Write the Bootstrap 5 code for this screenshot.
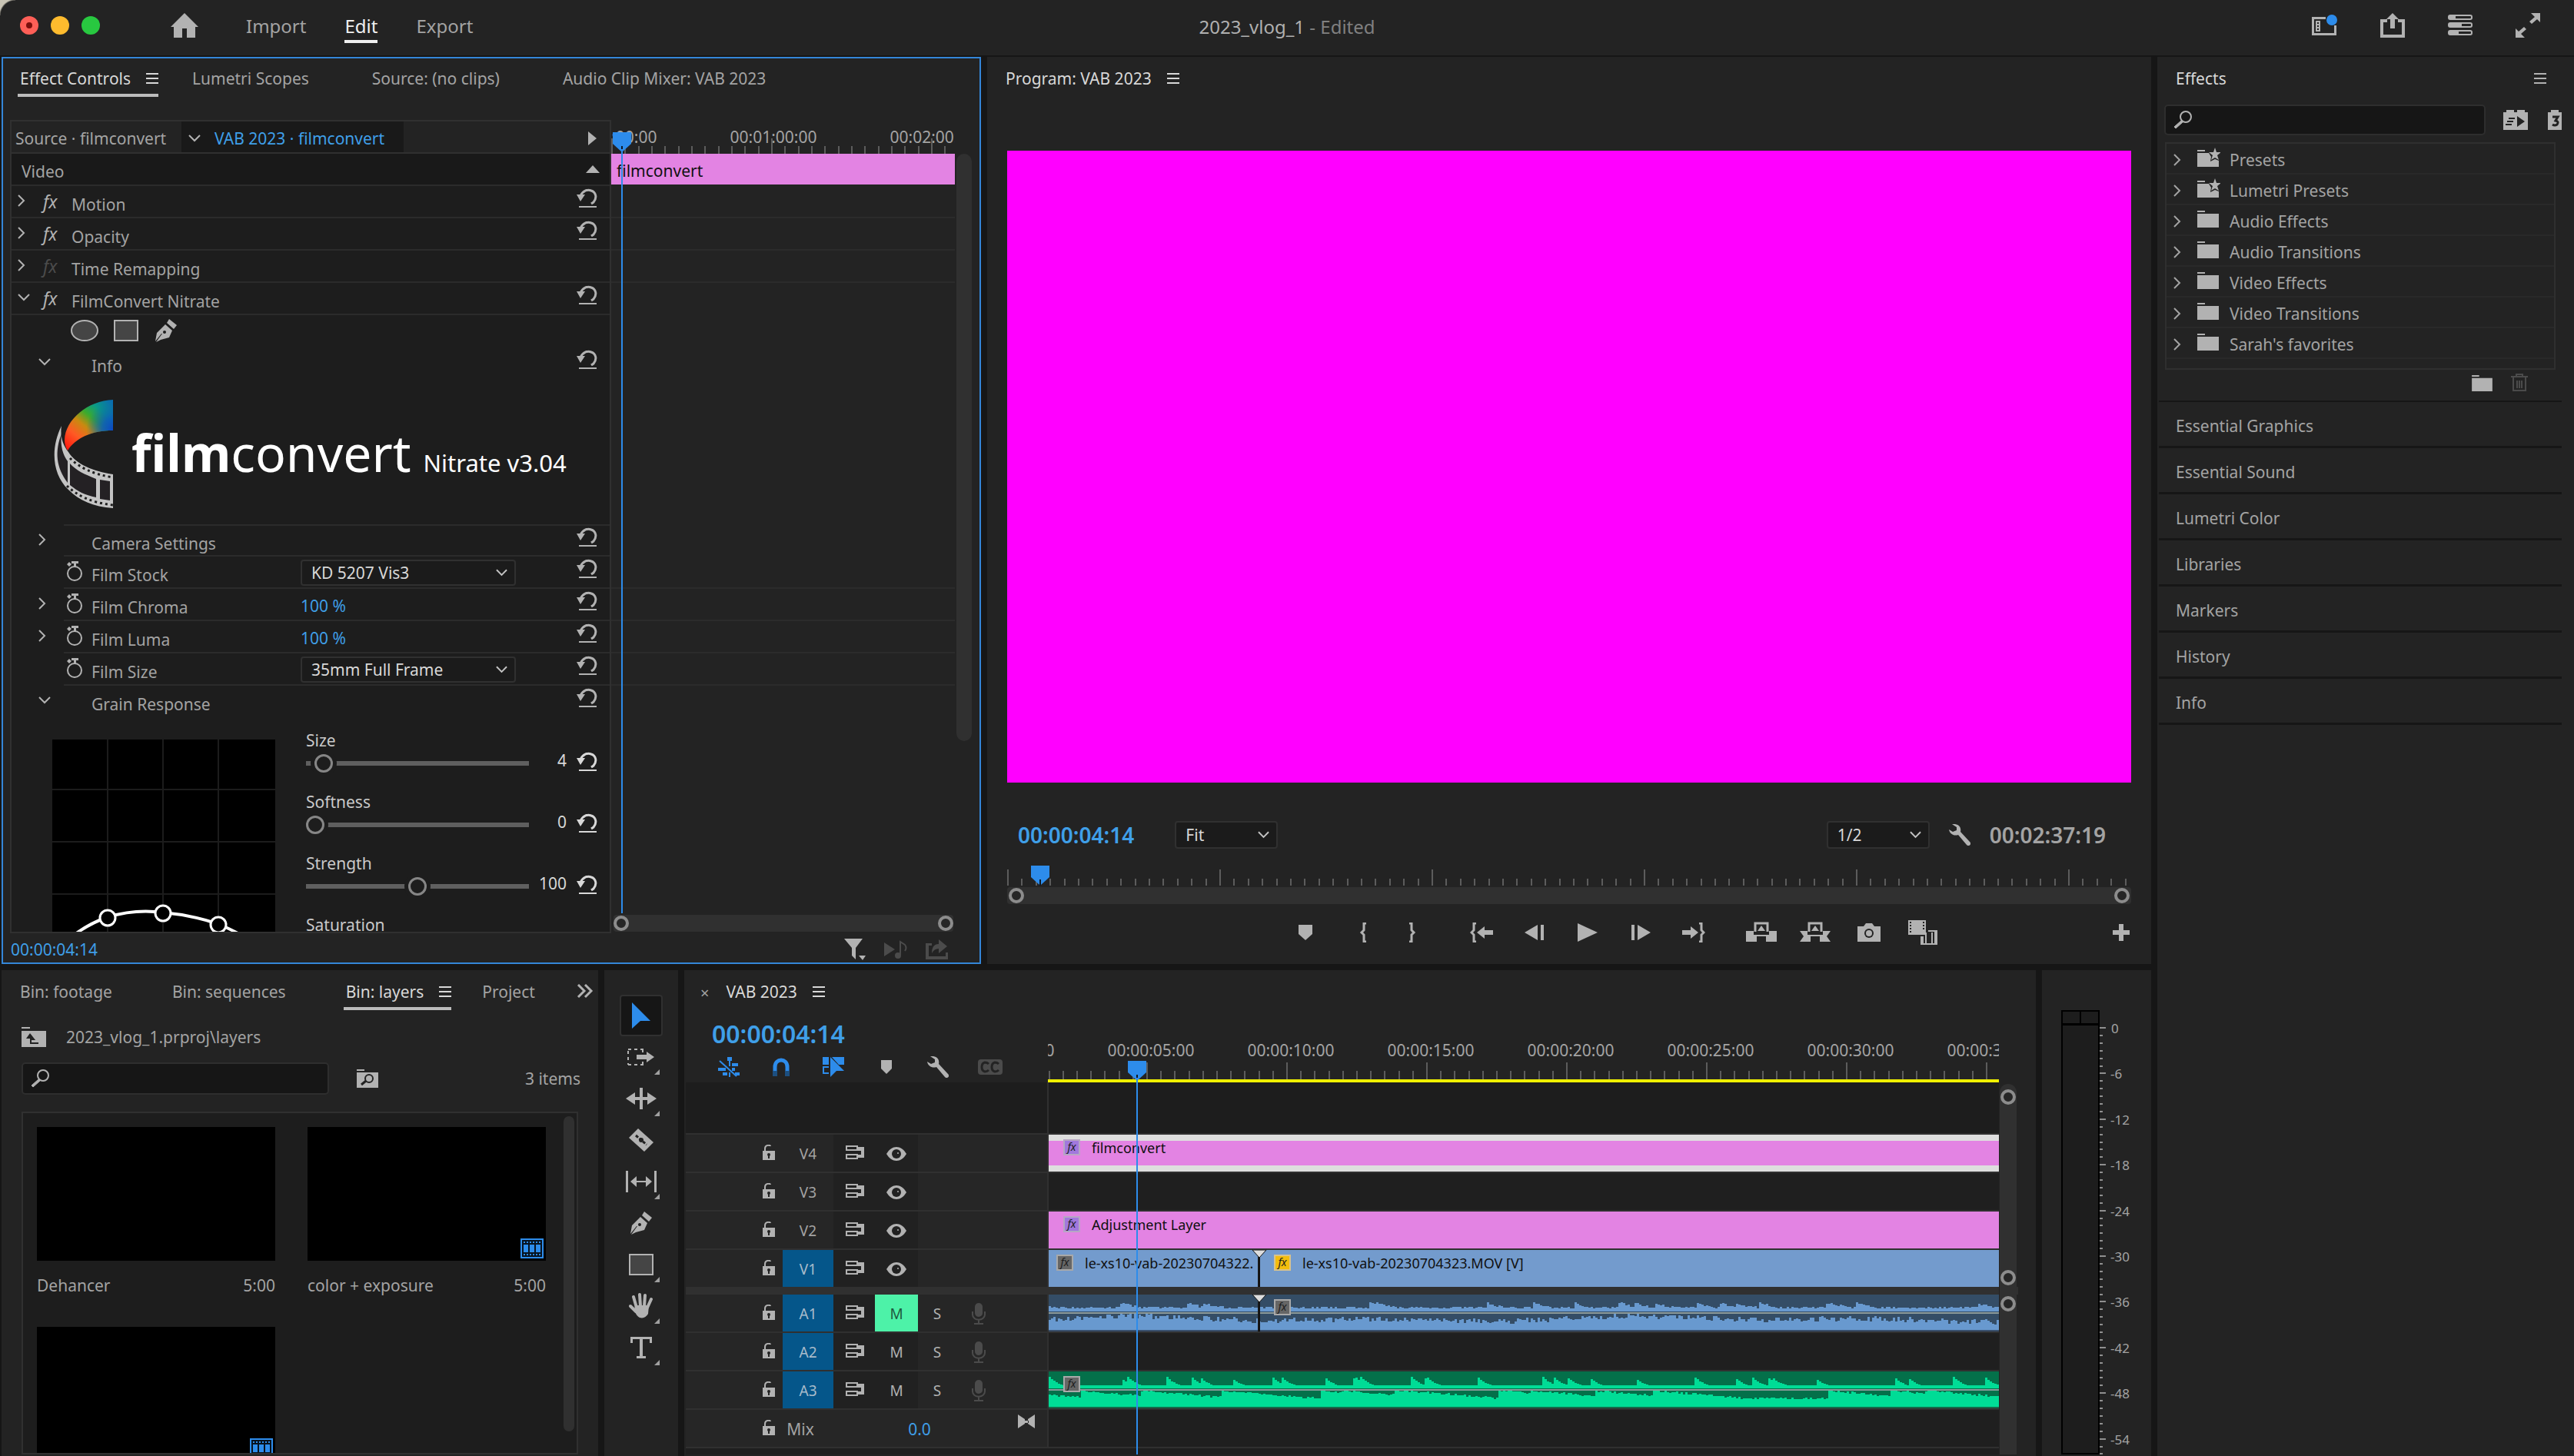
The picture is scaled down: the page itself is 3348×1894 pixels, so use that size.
<!DOCTYPE html>
<html lang="en" data-bs-theme="dark">
<head>
<meta charset="utf-8">
<meta name="viewport" content="width=device-width, initial-scale=1">
<title>2023_vlog_1</title>
<link href="https://cdn.jsdelivr.net/npm/bootstrap@5.3.0/dist/css/bootstrap.min.css" rel="stylesheet">
<style>
:root{--panel:#232323;--gap:#161616;--deep:#1d1d1d;--line:#2b2b2b;--edge:#303030;--txt:#a3a3a3;--hi:#d8d8d8;--icon:#b2b2b2;--blue:#2d8ceb;--link:#3f9fe8;--pink:#e383e3}
body{background:var(--gap);color:var(--txt);font-family:"Noto Sans","Open Sans",sans-serif;font-size:21px;line-height:28px;height:100vh;overflow:hidden}
button,a.tab-item,a.mode{background:none;border:0;padding:0;color:inherit;text-decoration:none;font:inherit;text-align:left}
svg{display:block;flex:none;fill:currentColor}
.icn{color:var(--icon)}
.dimmed{color:#4b4b4b}
.hi{color:var(--hi)}
.hot{color:var(--link)}
.panel{background:var(--panel);border:2px solid var(--panel);overflow:hidden}
.panel.focused{border-color:#3486d8}
.minh0{min-height:0}.minw0{min-width:0}
/* title bar */
.titlebar{background:radial-gradient(circle at 20px 20px,transparent 19px,#c9c4b5 21px) 0 0/20px 20px no-repeat,var(--panel);height:72px;font-size:24px;padding:0 44px 6px 26px;position:relative}
.titlebar .dot{width:24px;height:24px;border-radius:50%}
.dot.r{background:#fe5f57}.dot.r i{display:block;width:8px;height:8px;border-radius:50%;background:#7a0f0c;margin:8px}
.dot.y{background:#febb2e}.dot.g{background:#28c840}
.mode{height:46px;padding-top:10px!important;border-bottom:4px solid transparent!important;line-height:30px}
.mode.active{color:#f0f0f0;border-color:#f0f0f0!important}
.doc-title{position:absolute;left:0;right:0;top:19px;text-align:center;pointer-events:none;line-height:32px;color:#808080}
/* tabs */
.tabbar{height:50px;padding-left:19px;gap:41px;flex:none}
.bin-tabs{gap:37px}
.tab-item{height:50px;border-bottom:4px solid transparent!important;padding:5px 38px 0 3px!important;white-space:nowrap;display:flex;align-items:center;gap:20px}
.tab-item.active{color:var(--hi);border-color:#bcbcbc!important;padding-right:0!important}
.tab-item.solo{border-color:transparent!important}
/* effect controls */
.w-effects{width:1274px}
.fx-list{width:782px;background:var(--deep);border:2px solid var(--edge);overflow:hidden}
.src-row{height:42px;background:var(--panel);border-bottom:2px solid var(--edge);padding-top:4px}
.src-row .seq{background:#191919;align-self:stretch;margin-top:-4px;padding:4px 25px 0 9px;gap:18px}
.prow{height:42px;border-bottom:2px solid var(--line);padding-right:15px}
.prow.low{height:40px}
.prow .lbl{padding-top:8px}
.prow .tw{width:30px;padding:0 0 3px 8px}
.prow .fxm{width:48px;padding-left:11px}
.prow button{padding-bottom:8px}
.sub{margin-left:68px;padding-left:0}
.sub .tw{width:37px;margin-left:-37px;padding-left:4px}
.sub .clock{width:36px;padding:0 0 2px 3px}
.sub .val{padding-top:2px}
.sub .val a{display:block;padding-top:2px}
.namecol{width:272px}
.fx-i{font-style:italic;font-size:23px;line-height:28px}
.form-select.dd{width:280px;height:34px;padding:0 34px 0 12px;font-size:21px;line-height:30px;color:var(--hi);background-color:#1b1b1b;border:2px solid var(--edge);border-radius:4px;background-image:url("data:image/svg+xml,%3Csvg xmlns='http://www.w3.org/2000/svg' viewBox='0 0 16 10'%3E%3Cpath d='M1 1l7 7 7-7' fill='none' stroke='%23c4c4c4' stroke-width='2'/%3E%3C/svg%3E");background-size:15px 10px;background-position:right 9px center}
.form-select.dd.short{width:134px;height:36px}
.logo-row{height:190px;border-bottom:2px solid var(--line);margin-left:68px;padding:26px 0 0 0;color:#fff}
.brandword{font-size:66px;line-height:100px}
.brandword b{font-weight:700}.brandword span{font-weight:400}
.brandver{font-size:31px}
.sliders{padding-left:40px;padding-top:14px;width:392px}
.slide-item{height:80px}
.slide-item label{line-height:30px;display:block;color:#c9c9c9}
input[type=range].knob{appearance:none;-webkit-appearance:none;width:290px;height:24px;background:none;margin:0;display:block;overflow:hidden}
input.knob::-webkit-slider-runnable-track{height:6px;background:#5f5f5f}
input.knob::-webkit-slider-thumb{-webkit-appearance:none;width:24px;height:24px;border-radius:50%;background:var(--deep);border:3px solid #868686;margin-top:-9px;box-shadow:0 0 0 5px var(--deep)}
.fx-time{overflow:hidden;position:relative}
.ruler-labels{white-space:nowrap}
.ruler-labels span{flex:none;text-align:center}
.grid-row{height:42px;border-bottom:2px solid var(--line)}
.clipbar{background:var(--pink);color:#111}
.vscroll{width:20px;border-radius:10px;background:var(--edge)}
.zoombar{height:22px;background:var(--edge);border-radius:4px}
.zoombar i,.vzoom i{display:block;width:20px;height:20px;border:4px solid #8c8c8c;border-radius:50%;background:#262626}
.vzoom{width:22px;background:var(--edge)}
.playhead{position:absolute;top:0;bottom:0;width:24px;margin-left:-12px;pointer-events:none}
.playhead::after{content:"";position:absolute;left:11px;top:22px;bottom:0;width:2px;background:var(--blue)}
.playhead.nub::after{display:none}
.playhead svg{color:var(--blue)}
/* program */
.video{background:#f0f;margin:70px 24px 0}
.tc-lg{font-size:28px;font-weight:600;line-height:36px}
.tc-xl{font-size:32px;font-weight:600;line-height:36px}
.tbtn{display:flex;justify-content:center;align-items:center;height:48px;color:var(--icon)}
.w64{width:64px}.w69{width:69px}.w70{width:70px}
/* sidebar */
.w-side{width:542px;background:var(--panel)}
.findbox{background:#161616;border:2px solid #2e2e2e;border-radius:5px;height:40px;padding-left:10px}
.findbox input{background:none;border:0;outline:0;color:var(--hi);width:100%;min-width:0;font-size:20px;line-height:24px;padding:0 6px}
.tree{border:2px solid #2f2f2f;height:296px;margin:9px 24px 0 10px}
.tree button{display:flex;align-items:center;height:40px;width:100%;border-bottom:2px solid #292929!important;padding:4px 0 0 9px!important}
.tree .fold{width:42px;margin:-6px 0 0 21px}
.acc{height:60px;display:flex;align-items:center;padding-left:22px!important;border-bottom:3px solid var(--gap)!important;margin:0 16px 0 2px;padding-top:4px!important}
/* bins */
.w-bin{width:776px}
.bins{border:2px solid var(--edge);background:var(--deep);padding:18px 3px 0 18px;margin:22px 24px 0 24px}
.thumb{background:#000;height:174px;width:310px;position:relative}
.thumb svg{position:absolute;right:3px;bottom:3px}
/* tools */
.w-tools{width:96px}
.tool{width:56px;height:54px;display:flex;align-items:center;justify-content:center;position:relative;color:var(--icon)}
.tool.active{background:#161616;border:2px solid var(--edge);border-radius:4px;color:var(--blue)}
.tool.more::after{content:"";position:absolute;right:4px;bottom:4px;border:solid transparent;border-width:0 0 7px 7px;border-bottom-color:#a0a0a0}
/* timeline */
.w-head{width:470px;flex:none}
.trk{height:50px;border-bottom:2px solid var(--edge);display:flex;flex:none}
.trk .w-head{background:#262626;display:flex;align-items:stretch;font-size:19px}
.trk .lane{flex:1;border-left:2px solid var(--edge);background:#1f1f1f;position:relative;display:flex;overflow:hidden;min-width:0}
.cell{display:flex;align-items:center;justify-content:center;padding-top:2px!important}
.c-lock{width:126px;padding:0 0 2px 90px!important}.c-lab{width:66px}.c-sync{width:54px;background:#212121;padding:0 0 2px 2px!important}.c-eye{width:56px;background:#212121}.c-s{width:50px}.c-mic{width:58px}
.c-lab.on{background:#05568a;color:#a9bccb}
.c-eye.mute{background:#4df2a8;color:#1d5a40}
.clip{flex:1;color:#101010;font-size:18px;line-height:24px;padding:5px 0 0 19px;display:flex;align-items:flex-start;gap:15px;white-space:nowrap;overflow:hidden;min-width:0;position:relative}
.clip.pk{background:var(--pink)}.clip.bl{background:#739bcd}
.clip.sel{box-shadow:inset 0 8px #dedede,inset 0 -8px #dedede}
.clip.first{flex:none;width:274px;padding-left:10px;border-right:2px solid #1b1b1b}
.fxb{width:22px;height:21px;border:2px solid #a9a9a9;background:#666;font-style:italic;font-size:14px;line-height:15px;text-align:center;color:#1c1c1c;flex:none;margin-top:1px}
.fxb.v{background:#a178dd;border-color:#b7a6c4}.fxb.y{background:#f3bd0d;border-color:#d8c38c}
.wave{position:absolute;left:0;top:0;width:100%;height:48px}
.cut{position:absolute;left:264px;top:0;z-index:2}
.workbar{height:4px;background:#f0f000}
.w-meter{width:142px}
.meter{width:50px;border:2px solid #000;background:#1d1d1d}
.meter .peak{height:18px;border-bottom:3px solid #000}
.meter .peak i{display:block;width:2px;height:16px;background:#000;margin:auto}
.scale{margin-top:11px;font-size:17px}
</style>
<script src="https://cdn.jsdelivr.net/npm/bootstrap@5.3.0/dist/js/bootstrap.bundle.min.js"></script>
</head>
<body class="d-flex flex-column">
<svg width="0" height="0" class="position-absolute" aria-hidden="true">
<symbol id="ham" viewBox="0 0 16 14"><path d="M0 0h16v2H0zM0 6h16v2H0zM0 12h16v2H0z"/></symbol>
<symbol id="right" viewBox="0 0 10 16"><path d="M1 1l7 7-7 7" fill="none" stroke="currentColor" stroke-width="2"/></symbol>
<symbol id="down" viewBox="0 0 16 10"><path d="M1 1l7 7 7-7" fill="none" stroke="currentColor" stroke-width="2"/></symbol>
<symbol id="reset" viewBox="0 0 28 26"><path d="M5 10C8 3 14 1 19 3c6 2 8 9 3 15l-3 2" fill="none" stroke="currentColor" stroke-width="3"/><path d="M0 8h11l-6 9zM3 23h23v2H3z"/></symbol>
<symbol id="clock" viewBox="0 0 22 28"><circle cx="11" cy="17" r="9" fill="none" stroke="currentColor" stroke-width="2"/><path d="M7 1h9v3h-3v4h-3V4H7zM1 5l3-3 3 3-3 3z"/></symbol>
<symbol id="lens" viewBox="0 0 26 26"><circle cx="16" cy="9" r="7" fill="none" stroke="currentColor" stroke-width="2"/><path d="M10 14l2 2-9 8-2-2z" stroke="currentColor"/></symbol>
<symbol id="fold" viewBox="0 0 28 22"><path d="M0 0h10v2H0zM0 4h28v18H0z"/></symbol>
<symbol id="foldstar" viewBox="0 0 30 26"><path d="M0 3h10v2H0zM0 7h15l3 5-1 6 6-3 5 2v8H0z"/><path d="M23 0l2 6h6l-5 4 2 6-5-3-5 3 2-6-5-4h6z"/></symbol>
<symbol id="pen" viewBox="0 0 32 32"><path d="M20 1l10 8-4 5-9-8zM15 8l9 8-4 9-11 3-6 3 8-11-1 0-8 10 2-11z"/><circle cx="14" cy="18" r="2" fill="#1d1d1d"/></symbol>
<symbol id="head" viewBox="0 0 24 26"><path d="M0 0h24v15l-11 10h-2L0 15z"/><path d="M11 18h2v8h-2z" fill="#101820"/></symbol>
<symbol id="wrench" viewBox="0 0 28 28"><path d="M4 0h4c6 1 8 5 7 10l12 13c3 3-1 7-4 4L12 14c-5 2-11-1-12-7l5 3 5-2 0-4z"/></symbol>
<symbol id="marker" viewBox="0 0 14 18"><path d="M0 0h14v11l-7 7-7-7z"/></symbol>
<symbol id="lock" viewBox="0 0 16 20"><path d="M0 8h16v12H0z"/><path d="M3 8V5c0-5 7-5 7-3" fill="none" stroke="currentColor" stroke-width="2"/><circle cx="8" cy="13" r="2" fill="#222"/><path d="M7 13h2v5H7z" fill="#222"/></symbol>
<symbol id="sync" viewBox="0 0 24 18"><path d="M1 1h14v5H1zM1 12h14v5H1z" fill="none" stroke="currentColor" stroke-width="2"/><path d="M16 2h8v14h-8v-4h4V7h-4z"/></symbol>
<symbol id="eye" viewBox="0 0 26 18"><path d="M0 9C7-3 19-3 26 9 19 21 7 21 0 9z"/><circle cx="13" cy="9" r="6" fill="#212121"/><circle cx="15" cy="8" r="1"/></symbol>
<symbol id="mic" viewBox="0 0 18 28"><rect x="4" y="0" width="10" height="18" rx="5"/><path d="M1 11v4c0 9 16 9 16 0v-4M9 22v4M3 27h12" fill="none" stroke="currentColor" stroke-width="2"/></symbol>
<symbol id="film" viewBox="0 0 30 26"><path d="M0 0h30v26H0z" fill="#2d8ceb"/><path d="M2 2h26v22H2z" fill="#071320"/><path d="M4 8h6v10H4zM12 8h6v10h-6zM20 8h6v10h-6z" fill="#2d8ceb"/><path d="M4 5h22M4 21h22" stroke="#2d8ceb" stroke-width="2" stroke-dasharray="2 2"/></symbol>
</svg>

<header class="titlebar d-flex align-items-center">
  <div class="d-flex" style="gap:16px"><span class="dot r"><i></i></span><span class="dot y"></span><span class="dot g"></span></div>
  <button class="icn" style="margin-left:92px" aria-label="Home"><svg width="36" height="32" viewBox="0 0 36 32"><path d="M18 0l18 18h-4v14H21V20h-6v12H4V18H0z"/></svg></button>
  <nav class="d-flex" style="margin-left:62px;gap:50px"><a class="mode" href="#">Import</a><a class="mode active" href="#">Edit</a><a class="mode" href="#">Export</a></nav>
  <div class="doc-title"><span style="color:#b0b0b0">2023_vlog_1</span> - Edited</div>
  <div class="d-flex align-items-center ms-auto icn" style="gap:56px">
    <button aria-label="Workspaces"><svg width="34" height="32" viewBox="0 0 34 32"><path d="M1 5h18v3H4v18h26V16h3v13H1z"/><path d="M6 10h6v14H6z"/><path d="M8 12h2v2H8zM8 16h2v2H8zM8 20h2v2H8z" fill="#232323"/><circle cx="27" cy="9" r="7" fill="#2d8ceb"/></svg></button>
    <button aria-label="Quick export"><svg width="32" height="32" viewBox="0 0 32 32"><path d="M0 8h9v4H4v16h24V12h-5V8h9v24H0z"/><path d="M16 0l8 8h-5v12h-6V8H8z"/></svg></button>
    <button aria-label="Progress"><svg width="32" height="28" viewBox="0 0 32 28"><g fill="none" stroke="currentColor" stroke-width="2"><rect x="1" y="1" width="30" height="5" rx="2"/><rect x="1" y="11" width="30" height="5" rx="2"/><rect x="1" y="21" width="30" height="5" rx="2"/></g><path d="M1 2h9v3H1zM1 12h17v3H1zM1 22h13v3H1z"/></svg></button>
    <button aria-label="Full screen"><svg width="32" height="32" viewBox="0 0 32 32"><path d="M20 0h12v12l-4-4-7 6-3-3 7-6zM12 32H0V20l4 4 7-6 3 3-7 6z"/></svg></button>
  </div>
</header>

<main class="d-flex flex-fill minh0" style="gap:8px;padding:2px 0 0 2px">
<div class="d-flex flex-column flex-fill minw0" style="gap:8px">
  <div class="d-flex minh0" style="gap:8px;flex:1180 1 0">

    <!-- Effect controls -->
    <section class="panel focused w-effects d-flex flex-column flex-shrink-0">
      <nav class="tabbar d-flex">
        <a class="tab-item active" href="#">Effect Controls<svg width="16" height="14"><use href="#ham"/></svg></a>
        <a class="tab-item" href="#">Lumetri Scopes</a><a class="tab-item" href="#">Source: (no clips)</a><a class="tab-item" href="#">Audio Clip Mixer: VAB 2023</a>
      </nav>
      <div class="d-flex flex-fill minh0" style="margin-top:30px;padding-left:9px">
        <div class="fx-list flex-shrink-0">
          <div class="src-row d-flex align-items-center">
            <span style="padding-left:5px;width:221px">Source · filmconvert</span>
            <span class="seq hot d-flex align-items-center"><svg class="icn" width="16" height="10"><use href="#down"/></svg>VAB 2023 · filmconvert</span>
            <svg class="icn ms-auto" style="margin-right:17px" width="11" height="18" viewBox="0 0 11 18"><path d="M0 0l11 9-11 9z"/></svg>
          </div>
          <div class="prow d-flex align-items-center" style="background:#191919"><span style="padding:6px 0 0 13px">Video</span><svg class="icn ms-auto" style="margin-right:-2px" width="18" height="10" viewBox="0 0 18 10"><path d="M9 0l9 10H0z"/></svg></div>
          <div id="fxrows"></div>
          <div class="d-flex align-items-center" style="height:42px;padding:0 0 2px 77px;gap:20px">
            <button aria-label="Ellipse mask"><svg width="36" height="28" viewBox="0 0 36 28"><ellipse cx="18" cy="14" rx="17" ry="13" fill="#454545" stroke="#b2b2b2" stroke-width="2"/></svg></button>
            <button aria-label="Rectangle mask"><svg width="32" height="28" viewBox="0 0 32 28"><path d="M1 1h30v26H1z" fill="#454545" stroke="#b2b2b2" stroke-width="2"/></svg></button>
            <button class="icn" aria-label="Pen mask"><svg width="32" height="32"><use href="#pen"/></svg></button>
          </div>
          <div class="prow sub d-flex align-items-center" style="border-color:transparent"><span class="tw icn"><svg width="16" height="10"><use href="#down"/></svg></span><span class="clock"></span><span class="lbl">Info</span><button class="icn ms-auto" aria-label="Reset"><svg width="28" height="26"><use href="#reset"/></svg></button></div>
          <div class="logo-row d-flex">
            <svg width="80" height="144" viewBox="0 0 80 144" style="margin-left:-14px" aria-hidden="true">
              <defs><linearGradient id="lg1" x1="0.1" y1="1" x2="0.9" y2="0"><stop offset="0" stop-color="#ff1a10"/><stop offset=".25" stop-color="#ff5a24"/><stop offset=".45" stop-color="#c98a10"/><stop offset=".62" stop-color="#3cab2c"/><stop offset=".8" stop-color="#0a9a86"/><stop offset="1" stop-color="#0a6fae"/></linearGradient>
              <radialGradient id="lg2" cx="1" cy=".58" r=".55"><stop offset="0" stop-color="#0b49c4"/><stop offset=".4" stop-color="#0b55c4" stop-opacity=".8"/><stop offset="1" stop-color="#0b60b0" stop-opacity="0"/></radialGradient></defs>
              <path d="M78 0C45 1 16 26 15 52q0 8 4 14C29 50 50 40 78 40z" fill="url(#lg1)"/><path d="M78 0C45 1 16 26 15 52q0 8 4 14C29 50 50 40 78 40z" fill="url(#lg2)"/>
              <path d="M11 34C-3 62-2 96 20 117c14 14 32 22 58 24V97C52 93 30 84 20 68 12 58 9 46 11 34z" fill="#c4c4c4"/>
              <path d="M11 44C2 68 4 88 19 108V80C13 72 9 60 11 44zM22 83v28c10 8 19 13 34 16v-24C41 97 30 92 22 83zM61 104v25l13 2v-25z" fill="#242124"/>
              <path d="M22 76c12 12 30 21 56 25M18 112c14 13 32 22 60 25" fill="none" stroke="#1d1d1d" stroke-width="3" stroke-dasharray="3 4"/>
            </svg>
            <div class="d-flex align-items-baseline" style="margin-left:22px;gap:16px;padding-top:18px"><span class="brandword"><b>film</b><span>convert</span></span><span class="brandver">Nitrate v3.04</span></div>
          </div>
          <div id="paramrows"></div>
          <div class="d-flex" style="padding-left:53px">
            <svg width="290" height="272" viewBox="0 0 290 272" style="margin-top:28px"><path d="M0 0h290v272H0z" fill="#000"/><path d="M72 0v272M144 0v272M216 0v272M0 65h290M0 133h290M0 201h290" stroke="#1c1c1c" stroke-width="2"/><path d="M18 262Q45 240 72 231Q108 220 144 225Q180 228 216 240Q240 250 262 264" fill="none" stroke="#fff" stroke-width="4"/><g fill="#000" stroke="#fff" stroke-width="3"><circle cx="72" cy="232" r="10"/><circle cx="144" cy="226" r="10"/><circle cx="216" cy="241" r="10"/></g></svg>
            <div class="sliders" id="sliders"></div>
          </div>
        </div>
        <div class="fx-time d-flex flex-column flex-fill">
          <div style="height:44px;position:relative;overflow:hidden"><div class="ruler-labels d-flex" style="margin:8px 0 0 -101px"><span style="width:208px">00:00:00:00</span><span style="width:208px">00:01:00:00</span><span style="width:208px">00:02:00:00</span></div>
          <svg class="ticks position-absolute bottom-0 start-0 w-100" height="24" data-from="1" data-count="12" data-gap="208" data-minor="10" data-major="20"></svg></div>
          <div class="clipbar" style="height:40px;padding:8px 0 0 7px">filmconvert</div>
          <div class="flex-fill minh0 overflow-hidden" id="gridlines" style="padding-top:2px"></div>
          <div class="zoombar d-flex justify-content-between align-items-center" style="margin:2px 2px 2px 3px"><i></i><i></i></div>
          <div class="playhead" style="left:14px;top:16px;bottom:26px"><svg width="24" height="26"><use href="#head"/></svg></div>
        </div>
        <div style="width:32px;padding:44px 10px 0 2px"><div class="vscroll" style="height:764px"></div></div>
      </div>
      <div class="d-flex align-items-center" style="height:40px;padding:4px 40px 0 10px"><span class="hot me-auto">00:00:04:14</span>
        <div class="d-flex align-items-center" style="gap:24px">
        <svg class="icn" width="28" height="28" viewBox="0 0 28 28"><path d="M0 0h24l-9 12v15l-5-5V12zM19 22h9l-4 6z"/></svg>
        <svg class="dimmed" width="30" height="24" viewBox="0 0 30 24"><path d="M0 3l14 9-14 9z"/><path d="M21 20V2l6 4q3 4 0 8" fill="none" stroke="currentColor" stroke-width="2"/><circle cx="18" cy="20" r="4"/></svg>
        <svg class="dimmed" width="30" height="26" viewBox="0 0 30 26"><path d="M0 5h8v3H4v14h22v-5h3v9H0z"/><path d="M8 18q0-12 9-12V0l11 9-11 9v-6q-6 0-9 6z"/></svg></div>
      </div>
    </section>

    <!-- Program monitor -->
    <section class="panel flex-fill d-flex flex-column minw0">
      <nav class="tabbar d-flex"><a class="tab-item active solo" href="#">Program: VAB 2023<svg width="16" height="14"><use href="#ham"/></svg></a></nav>
      <div class="video flex-fill"></div>
      <div class="d-flex align-items-center" style="height:54px;margin:41px 57px 1px 38px"><span class="hot tc-lg">00:00:04:14</span>
        <select class="form-select dd short" style="margin-left:53px" aria-label="Zoom level"><option>Fit</option></select>
        <select class="form-select dd short ms-auto" aria-label="Playback resolution"><option>1/2</option></select>
        <svg class="icn" style="margin:0 25px" width="28" height="28"><use href="#wrench"/></svg><span class="tc-lg">00:02:37:19</span></div>
      <div style="height:38px;margin:0 24px;position:relative"><svg class="ticks position-absolute bottom-0 start-0 w-100" height="22" data-from="1" data-count="15" data-gap="276" data-minor="9" data-major="21"></svg><div class="playhead nub" style="left:43px;top:12px"><svg width="24" height="26"><use href="#head"/></svg></div></div>
      <div class="zoombar d-flex justify-content-between align-items-center" style="margin:2px 24px 0;padding:0 2px"><i></i><i></i></div>
      <div class="d-flex align-items-center" style="height:76px;flex:none;padding:0 17px 2px 0">
        <span style="flex:376"></span>
        <button class="tbtn w70" aria-label="Add marker"><svg width="18" height="20" viewBox="0 0 18 20"><path d="M0 0h18v12l-9 8-9-8z"/></svg></button>
        <button class="tbtn w64" style="margin-left:8px" aria-label="Mark in"><svg width="10" height="26" viewBox="0 0 10 26"><path d="M9 1H6v9l-3 3 3 3v9h3" fill="none" stroke="currentColor" stroke-width="3"/></svg></button>
        <button class="tbtn w64" aria-label="Mark out"><svg width="10" height="26" viewBox="0 0 10 26"><path d="M1 1h3v9l3 3-3 3v9H1" fill="none" stroke="currentColor" stroke-width="3"/></svg></button>
        <button class="tbtn w69" style="margin-left:24px" aria-label="Go to in"><svg width="30" height="26" viewBox="0 0 30 26"><path d="M8 1H5v9l-3 3 3 3v9h3" fill="none" stroke="currentColor" stroke-width="3"/><path d="M9 13l10-8v5h11v6H19v5z"/></svg></button>
        <button class="tbtn w69" aria-label="Step back"><svg width="26" height="20" viewBox="0 0 26 20"><path d="M0 10L17 0v20zM21 0h4v20h-4z"/></svg></button>
        <button class="tbtn w69" aria-label="Play"><svg width="26" height="24" viewBox="0 0 26 24"><path d="M0 0l26 12L0 24z"/></svg></button>
        <button class="tbtn w69" aria-label="Step forward"><svg width="26" height="20" viewBox="0 0 26 20"><path d="M26 10L9 0v20zM1 0h4v20H1z"/></svg></button>
        <button class="tbtn w69" aria-label="Go to out"><svg width="30" height="26" viewBox="0 0 30 26"><path d="M22 1h3v9l3 3-3 3v9h-3" fill="none" stroke="currentColor" stroke-width="3"/><path d="M21 13L11 5v5H0v6h11v5z"/></svg></button>
        <button class="tbtn w70" style="margin-left:18px" aria-label="Lift"><svg width="40" height="28" viewBox="0 0 40 28"><path d="M0 12h10v5h20v-5h10v14H26v-7H14v7H0z"/><path d="M12 13V2h16v11" fill="none" stroke="currentColor" stroke-width="3"/><path d="M20 5l5 7H15z"/></svg></button>
        <button class="tbtn w70" aria-label="Extract"><svg width="40" height="28" viewBox="0 0 40 28"><path d="M0 12h10v5h20v-5h10l-5 7 5 7H26v-7H14v7H0l5-7z"/><path d="M12 13V2h16v11" fill="none" stroke="currentColor" stroke-width="3"/><path d="M20 5l5 7H15z"/></svg></button>
        <button class="tbtn w70" aria-label="Export frame"><svg width="30" height="24" viewBox="0 0 30 24"><path d="M0 4h8l3-4h8l3 4h8v20H0z"/><circle cx="15" cy="13" r="6" fill="#232323"/><circle cx="15" cy="13" r="4"/></svg></button>
        <button class="tbtn w70" aria-label="Comparison view"><svg width="38" height="32" viewBox="0 0 38 32"><path d="M0 0h23v19H0z"/><path d="M3 2v16M20 2v10" stroke="#232323" stroke-width="2" stroke-dasharray="2 2"/><path d="M26 13h12v19H16V21h4v9h14V15h-8z"/><path d="M23 16v14M31 16v14" stroke="currentColor" stroke-width="2"/></svg></button>
        <span style="flex:203"></span>
        <button class="tbtn" style="width:40px" aria-label="Button editor"><svg width="22" height="22" viewBox="0 0 22 22"><path d="M8 0h6v8h8v6h-8v8H8v-8H0V8h8z"/></svg></button>
      </div>
    </section>
  </div>

  <div class="d-flex minh0" style="gap:8px;flex:632 1 0">
    <!-- Bins -->
    <section class="panel w-bin d-flex flex-column flex-shrink-0">
      <nav class="d-flex"><div class="tabbar bin-tabs d-flex overflow-hidden" style="width:696px"><a class="tab-item" href="#">Bin: footage</a><a class="tab-item" href="#">Bin: sequences</a><a class="tab-item active" href="#">Bin: layers<svg width="16" height="14"><use href="#ham"/></svg></a><a class="tab-item" href="#">Project</a></div>
      <button class="icn" style="padding-left:50px" aria-label="More tabs"><svg width="22" height="18" viewBox="0 0 22 18"><path d="M2 1l8 8-8 8M11 1l8 8-8 8" fill="none" stroke="currentColor" stroke-width="3"/></svg></button></nav>
      <div class="d-flex align-items-center" style="height:48px;padding:0 0 0 24px;margin-top:15px"><svg class="icn" width="32" height="26" viewBox="0 0 32 26"><path d="M0 0h11v2H0zM0 5h32v21H0z"/><path d="M11 10l5 6h-4v5h10" fill="none" stroke="#222" stroke-width="2"/><path d="M11 8l5 7H6z" fill="#222"/></svg><span style="padding-left:26px">2023_vlog_1.prproj\layers</span></div>
      <div class="d-flex align-items-center" style="margin:12px 21px 0 24px"><label class="findbox d-flex align-items-center icn" style="width:400px;height:42px"><svg width="26" height="26"><use href="#lens"/></svg><input type="search" aria-label="Search bin"></label>
        <svg class="icn" style="margin-left:36px" width="28" height="24" viewBox="0 0 28 24"><path d="M0 0h10v2H0zM0 4h28v20H0z"/><circle cx="16" cy="12" r="5" fill="none" stroke="#222" stroke-width="2"/><path d="M12 15l-6 5" stroke="#222" stroke-width="3"/></svg><span class="ms-auto">3 items</span></div>
      <div class="bins d-flex flex-fill minh0 overflow-hidden">
        <div class="d-flex flex-wrap align-content-start flex-fill" id="binlist" style="gap:22px 42px"></div>
        <div class="vscroll" style="height:410px;margin-top:-14px"></div>
      </div>
    </section>
    <!-- Tools -->
    <section class="panel w-tools d-flex flex-column align-items-center flex-shrink-0" style="padding-top:30px">
      <button class="tool active" aria-label="Selection"><svg width="24" height="34" viewBox="0 0 24 34"><path d="M0 0l24 24-13 0-11 10z"/></svg></button>
      <button class="tool more" aria-label="Track select"><svg width="36" height="22" viewBox="0 0 36 22"><path d="M1 1h20M1 21h20M1 3v18M20 2v3M20 17v3" stroke="currentColor" stroke-width="2" stroke-dasharray="4 4" fill="none"/><path d="M12 8h13V4l10 7-10 7v-4H12z"/></svg></button>
      <button class="tool more" aria-label="Ripple edit"><svg width="40" height="28" viewBox="0 0 40 28"><path d="M18 0h4v28h-4zM0 14l12-8v6h16V6l12 8-12 8v-6H12v6z"/></svg></button>
      <button class="tool" aria-label="Razor"><svg width="32" height="30" viewBox="0 0 32 30"><path d="M12 0l20 18-12 12L0 12z"/><path d="M9 9l14 12" stroke="#222" stroke-width="3" stroke-dasharray="4 2"/><circle cx="16" cy="15" r="3" fill="#222"/></svg></button>
      <button class="tool more" aria-label="Slip"><svg width="40" height="28" viewBox="0 0 40 28"><path d="M0 0h3v28H0zM37 0h3v28h-3zM6 14l8-7v6h12V7l8 7-8 7v-6H14v6z"/></svg></button>
      <button class="tool" aria-label="Pen"><svg width="32" height="32"><use href="#pen"/></svg></button>
      <button class="tool more" aria-label="Rectangle"><svg width="32" height="28" viewBox="0 0 32 28"><path d="M1 1h30v26H1z" fill="#454545" stroke="#b2b2b2" stroke-width="2"/></svg></button>
      <button class="tool more" aria-label="Hand"><svg width="32" height="34" viewBox="0 0 32 34"><path d="M10 19L6 5M15 17L14 2M20 17l1-14M24 19l5-11M9 24l-7-7" stroke="currentColor" stroke-width="4" stroke-linecap="round"/><path d="M8 16h18l-1 11q-4 7-11 5-4-2-7-9z"/></svg></button>
      <button class="tool more" aria-label="Type"><svg width="28" height="28" viewBox="0 0 28 28"><path d="M0 0h28v8h-3V3h-9v22h4v3H8v-3h4V3H3v5H0z"/></svg></button>
    </section>
    <!-- Timeline -->
    <section class="panel d-flex flex-column flex-fill minw0">
      <nav class="tabbar d-flex" style="padding-left:19px;gap:19px"><button aria-label="Close" style="padding:6px 0 0;font-size:20px">×</button><a class="tab-item active solo" href="#">VAB 2023<svg width="16" height="14"><use href="#ham"/></svg></a></nav>
      <div class="d-flex flex-fill minh0">
        <div class="d-flex flex-column flex-fill minw0 position-relative">
          <div class="d-flex" style="height:94px">
            <div class="w-head"><div class="hot tc-xl" style="padding:13px 0 1px 34px">00:00:04:14</div>
              <div class="d-flex align-items-center" style="height:44px;padding:4px 0 0 42px;gap:40px;color:var(--blue)">
                <svg width="28" height="26" viewBox="0 0 28 26"><path d="M12 0h6v5h-2v7h-2V5h-2zM18 8h8v4h-8zM18 14h4v4h-4zM0 14h10v4H0zM6 20h6v4H6zM14 20h2v6h-2zM22 20h6v4h-6z"/><path d="M2 5l22 20" stroke="currentColor" stroke-width="2"/></svg>
                <svg width="24" height="24" viewBox="0 0 24 24" style="margin-left:2px"><path d="M4 17v-5c0-12 16-12 16 0v5" fill="none" stroke="currentColor" stroke-width="5"/><path d="M1 17h6v7H1zM17 17h6v7h-6z" fill="#1c4f80"/></svg>
                <svg width="28" height="26" viewBox="0 0 28 26" style="margin-left:2px"><path d="M0 0h8v10H0zM12 0h16v10h-7zM8 13v-1H0v10h8v-2H2v-6h6zM10 0l18 18H18l-8 8z"/></svg>
                <svg class="icn" width="14" height="18" style="margin-left:8px"><use href="#marker"/></svg>
                <svg class="icn" width="28" height="28" style="margin-left:6px"><use href="#wrench"/></svg>
                <svg class="dimmed" width="32" height="20" viewBox="0 0 32 20" style="margin-left:-2px"><rect width="32" height="20" rx="4"/><path d="M14 6q-2-2-5-2-4 1-4 6t4 6q3 0 5-2M27 6q-2-2-5-2-4 1-4 6t4 6q3 0 5-2" fill="none" stroke="#232323" stroke-width="3"/></svg>
              </div></div>
            <div class="flex-fill overflow-hidden position-relative d-flex flex-column justify-content-between" style="margin-left:1px">
              <div class="ruler-labels d-flex" id="tlabels" style="margin:38px 0 0 -139px"></div>
              <svg class="ticks position-absolute start-0 w-100" style="bottom:4px" height="22" data-from="-53" data-count="10" data-gap="182" data-minor="11" data-major="22"></svg>
              <div class="workbar"></div>
            </div>
          </div>
          <div style="height:68px;background:var(--deep);border-bottom:2px solid var(--edge);flex:none"><div style="margin-left:470px;border-left:2px solid var(--edge);height:66px"></div></div>
          <div id="tracks" class="d-flex flex-column flex-fill minh0"></div>
          <div class="playhead" style="left:587px;top:66px"><svg width="24" height="26"><use href="#head"/></svg></div>
        </div>
        <div style="width:46px;padding-left:1px" class="d-flex flex-column flex-shrink-0">
          <div class="vzoom d-flex flex-column justify-content-between align-items-center" style="height:264px;margin-top:96px;padding:7px 0 2px;border-radius:11px 11px 0 0"><i></i><i></i></div>
          <div style="height:10px;width:24px;background:var(--edge)"></div>
          <div class="vzoom flex-fill d-flex flex-column align-items-center" style="padding-top:2px"><i></i></div>
        </div>
      </div>
    </section>
    <!-- Audio meters -->
    <section class="panel w-meter d-flex flex-shrink-0" style="padding:50px 0 0 23px">
      <div class="meter"><div class="peak"><i></i></div></div>
      <svg class="scale" width="60" height="700" id="mticks"></svg>
    </section>
  </div>
</div>

<!-- Effects browser -->
<aside class="w-side flex-shrink-0 d-flex flex-column">
  <div class="d-flex align-items-center hi" style="height:62px;padding:0 36px 6px 24px">Effects<svg class="ms-auto icn" width="16" height="14"><use href="#ham"/></svg></div>
  <div class="d-flex align-items-center" style="padding:0 16px 0 9px"><label class="findbox d-flex align-items-center icn flex-fill"><svg width="26" height="26"><use href="#lens"/></svg><input type="search" aria-label="Search effects"></label>
    <svg class="icn" style="margin:0 26px 0 23px" width="32" height="26" viewBox="0 0 32 26"><path d="M0 3h4V0h10v3h4V0h10v3h4v23H0z"/><path d="M18 8l10 7-10 7zM7 10h8v2H7zM5 14h8v2H5zM3 18h8v2H3z" fill="#222"/></svg>
    <svg class="icn" width="18" height="26" viewBox="0 0 18 26"><path d="M0 3h4V0h10v3h4v23H0z"/><path d="M6 9h7l-3 5q5 1 2 5-3 2-6 0" fill="none" stroke="#222" stroke-width="3"/></svg></div>
  <div class="tree" id="tree"></div>
  <div class="d-flex align-items-center justify-content-end" style="height:42px;border-bottom:2px solid var(--gap);margin:0 16px 0 2px;padding:0 44px 6px 0;gap:24px"><button class="icn" aria-label="New bin"><svg width="27" height="21"><use href="#fold"/></svg></button><button class="dimmed" aria-label="Delete"><svg width="22" height="24" viewBox="0 0 22 24"><path d="M0 4h22M7 3V1h8v2M3 5v17h16V5M8 9v10M11 9v10M14 9v10" fill="none" stroke="currentColor" stroke-width="2"/></svg></button></div>
  <a class="acc tab-item" href="#">Essential Graphics</a><a class="acc tab-item" href="#">Essential Sound</a><a class="acc tab-item" href="#">Lumetri Color</a><a class="acc tab-item" href="#">Libraries</a><a class="acc tab-item" href="#">Markers</a><a class="acc tab-item" href="#">History</a><a class="acc tab-item" href="#">Info</a>
</aside>
</main>

<script>
const $ = id => document.getElementById(id);
const use = (id, w, h) => `<svg width="${w}" height="${h}"><use href="#${id}"/></svg>`;
const reset = `<button class="icn ms-auto" aria-label="Reset">${use('reset', 28, 26)}</button>`;

$('fxrows').innerHTML = [['Motion', 1, 1, 0], ['Opacity', 1, 1, 0], ['Time Remapping', 0, 0, 0], ['FilmConvert Nitrate', 1, 1, 1]].map(([n, on, r, open]) =>
  `<div class="prow d-flex align-items-center"><span class="tw icn">${open ? use('down', 16, 10) : use('right', 10, 16)}</span><span class="fxm fx-i ${on ? 'icn' : 'dimmed'}">fx</span><span class="lbl">${n}</span>${r ? reset : ''}</div>`).join('');

$('paramrows').innerHTML = [['Camera Settings', 'right', 0, ''], ['Film Stock', '', 1, 'KD 5207 Vis3'], ['Film Chroma', 'right', 1, '100 %'], ['Film Luma', 'right', 1, '100 %'], ['Film Size', '', 1, '35mm Full Frame'], ['Grain Response', 'down', 0, '']].map(([n, tw, clock, v], i) => {
  const val = v.includes('%') ? `<a class="hot text-decoration-none" href="#">${v}</a>` : v ? `<select class="form-select dd" aria-label="${n}"><option>${v}</option></select>` : '';
  const t = tw === 'right' ? use('right', 10, 16) : tw === 'down' ? use('down', 16, 10) : '';
  return `<div class="prow sub d-flex align-items-center${i ? '' : ' low'}"${i === 5 ? ' style="border-color:transparent"' : ''}><span class="tw icn">${t}</span><span class="clock icn">${clock ? use('clock', 22, 28) : ''}</span><span class="lbl namecol">${n}</span><span class="val">${val}</span>${reset}</div>`;
}).join('');

$('sliders').innerHTML = [['Size', 4, 100], ['Softness', 0, 100], ['Strength', 100, 200], ['Saturation', 50, 100]].map(([n, v, m]) =>
  `<div class="slide-item"><label for="s${n}">${n}</label><div class="d-flex align-items-center" style="margin-top:3px"><input class="knob flex-shrink-0" id="s${n}" type="range" min="0" max="${m}" value="${v}"><output class="text-end hi flex-shrink-0" style="width:49px;margin-top:-8px">${v}</output><button class="hi" style="margin:-4px 0 0 13px" aria-label="Reset">${use('reset', 28, 28)}</button></div></div>`).join('');

const gridRow = '<div class="grid-row"></div>';
$('gridlines').innerHTML = gridRow.repeat(3) + '<div style="height:356px"></div>' + gridRow.repeat(4);

$('tree').innerHTML = ['Presets', 'Lumetri Presets', 'Audio Effects', 'Audio Transitions', 'Video Effects', 'Video Transitions', "Sarah's favorites"].map((n, i) =>
  `<button>${use('right', 10, 16)}<span class="fold icn">${i < 2 ? use('foldstar', 30, 26) : use('fold', 28, 22)}</span><span>${n}</span></button>`).join('');

$('binlist').innerHTML = [['Dehancer', 0], ['color + exposure', 1], ['filmconvert', 1]].map(([n, f]) =>
  `<div style="width:310px;height:238px"><div class="thumb">${f ? use('film', 30, 26) : ''}</div><div class="d-flex justify-content-between" style="padding-top:18px"><span>${n}</span><span>5:00</span></div></div>`).join('');

$('tlabels').innerHTML = [0, 5, 10, 15, 20, 25, 30, 35].map(s => `<span style="width:182px">00:00:${String(s).padStart(2, '0')}:00</span>`).join('');

const wave = (bg, edge, fg, seed) => {
  let s = seed; const rnd = () => (s = (s * 16807) % 2147483647) / 2147483647;
  for (let i = 0; i < 9; i++) rnd();
  let top = 'M0 22', bot = 'M0 46', a = 5, b = 14;
  for (let x = 0; x < 1240; x += 3) {
    if (seed > 50) {
      a = rnd() < .07 ? 10 + rnd() * 5 : Math.max(4, a * .8);
      b = rnd() < .02 ? 19 : Math.max(9, b - .25);
      top += `V${22 - a | 0}H${x + 3}`; bot += `V${46 - b - rnd() * 3 | 0}H${x + 3}`;
    } else {
      a = rnd() < .04 ? 9 : Math.max(3, a * .88);
      b = 12 + 4 * Math.sin(x / 70) * Math.sin(x / 190 + 1);
      top += `V${22 - a - rnd() * 3 | 0}H${x + 3}`; bot += `V${46 - b + (rnd() * 7 - 5) | 0}H${x + 3}`;
    }
  }
  return `<svg class="wave" style="background:${bg}"><path fill="${fg}" d="${top}V22Z${bot}V46Z"/><path d="M0 24h1300" stroke="#8b9a9a" stroke-width="2"/><path d="M0 47h1300" stroke="${edge}" stroke-width="2"/></svg>`;
};
const cut = '<svg class="cut" width="20" height="50" viewBox="0 0 20 50"><path d="M9 8h2v42H9z" fill="#111"/><path d="M1 0h18l-9 10z" fill="#ddd" stroke="#111"/></svg>';
const fxb = (k = '') => `<span class="fxb ${k}">fx</span>`;
const lanes = {
  V4: `<div class="clip pk sel">${fxb('v')}filmconvert</div>`, V3: '',
  V2: `<div class="clip pk">${fxb('v')}Adjustment Layer</div>`,
  V1: `<div class="clip bl first">${fxb()}le-xs10-vab-20230704322.</div><div class="clip bl">${fxb('y')}le-xs10-vab-20230704323.MOV [V]</div>${cut}`,
  A1: `${wave('#344d66', '#3a506e', '#6899cf', 7)}<div class="clip first"></div><div class="clip">${fxb()}</div>${cut}`, A2: '',
  A3: `${wave('#04704a', '#16694a', '#00dc96', 91)}<div class="clip">${fxb()}</div>`
};
$('tracks').innerHTML = Object.entries(lanes).map(([n, lane]) => {
  const audio = n[0] === 'A', on = audio || n === 'V1';
  const tail = audio
    ? `<button class="cell c-eye ${n === 'A1' ? 'mute' : 'icn'}">M</button><button class="cell c-s icn">S</button><button class="cell c-mic dimmed" aria-label="Record">${use('mic', 18, 28)}</button>`
    : `<button class="cell c-eye icn" aria-label="Show">${use('eye', 26, 18)}</button>`;
  return `<div class="trk"${n === 'V1' ? ' style="height:58px;border-bottom-width:10px"' : ''}><div class="w-head"><button class="cell c-lock icn" aria-label="Lock">${use('lock', 16, 20)}</button><button class="cell c-lab ${on ? 'on' : ''}">${n}</button><button class="cell c-sync icn" aria-label="Sync lock">${use('sync', 24, 18)}</button>${tail}</div><div class="lane">${lane}</div></div>`;
}).join('') +
  `<div class="trk"><div class="w-head"><button class="cell c-lock icn" aria-label="Lock">${use('lock', 16, 20)}</button><span class="cell" style="width:46px;font-size:21px">Mix</span><span class="cell hot" style="margin-left:106px;width:52px;font-size:21px">0.0</span><svg class="icn" style="margin:6px 0 0 102px" width="22" height="18" viewBox="0 0 22 18"><path d="M0 0l9 6v6l-9 6zM22 0l-9 6v6l9 6zM8 8h6v3H8z"/></svg></div><div class="lane"></div></div>
  <div class="flex-fill" style="background:#1f1f1f"></div>`;

document.querySelectorAll('svg.ticks').forEach(el => {
  const d = el.dataset, h = +el.getAttribute('height'), g = +d.gap, n = +d.count;
  let p = '';
  for (let i = 0; +d.from + i * g / n < el.clientWidth; i++) p += `M${Math.round(+d.from + i * g / n)} ${h}v-${i % n ? d.minor : d.major}`;
  el.innerHTML = `<path d="${p}" stroke="#5c5c5c" stroke-width="2"/>`;
});

/* decibel scale: one tick per dB, a label every six */
let m = '', t = '';
for (let i = 0; i < 60; i++) {
  const y = Math.round(12 + i * 9.9);
  m += `M0 ${y}h${i % 6 ? 4 : 8}`;
  if (i % 6 === 0) t += `<text x="${i ? 14 : 15}" y="${y + 7}">${-i || 0}</text>`;
}
$('mticks').innerHTML = `<path d="${m}" stroke="#8f8f8f" stroke-width="2"/>${t}`;
</script>
</body>
</html>
